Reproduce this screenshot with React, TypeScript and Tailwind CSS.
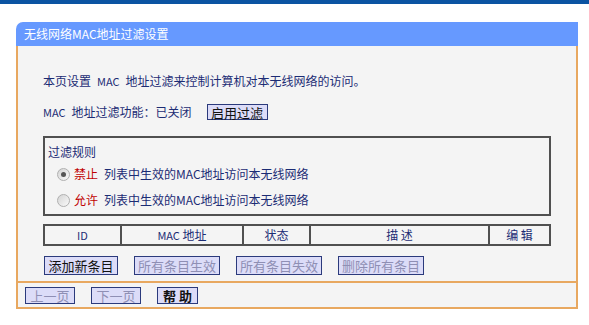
const font = "font-['SimSun','Noto_Sans_CJK_SC',sans-serif]";

const Btn = ({ label, disabled, className }: { label: string; disabled?: boolean; className: string }) => (
  <span
    className={`flex items-center justify-center border border-[#2b3a7c] bg-[#dcdcf8] text-[13px] leading-none ${
      disabled ? "text-[#8f8fb4]" : "text-[#111]"
    } ${className}`}
  >
    {label}
  </span>
);

const Radio = ({ checked }: { checked?: boolean }) => (
  <span className="flex h-[13px] w-[13px] items-center justify-center rounded-full border border-[#b0b0b0] bg-gradient-to-br from-[#d4d4d4] to-[#fafafa]">
    {checked && <span className="h-[5px] w-[5px] rounded-full bg-[#555]" />}
  </span>
);

export default function App() {
  return (
    <div className={`h-[325px] w-[589px] overflow-hidden bg-white ${font} text-[12px] text-[#1c2c74]`}>
      <div className="h-[4px] bg-[#0b54a2]" />
      <div className="ml-[16px] mt-[18px] w-[562px]">
        <div className="flex h-[24px] items-center rounded-tl-[7px] bg-[#6699ff] pl-[8px] text-[12px] text-white">
          无线网络MAC地址过滤设置
        </div>
        <div className="border-x-2 border-b-2 border-[#e8a860] bg-[#f4f4f4] pt-[25px]">
          <div className="pl-[25px] pr-[25px]">
            <div className="flex h-[20px] items-center">
              本页设置 <span className="mx-[6px] text-[11px]">MAC</span> 地址过滤来控制计算机对本无线网络的访问。
            </div>
            <div className="mt-[13px] flex h-[16px] items-center">
              <span className="text-[11px]">MAC</span>
              <span className="ml-[6px]">地址过滤功能：已关闭</span>
              <Btn label="启用过滤" className="ml-[15px] h-[16px] w-[61px]" />
            </div>
            <div className="mt-[16px] h-[80px] w-[508px] border-2 border-[#505050] pl-[3px]">
              <div className="mt-[6px] h-[16px] leading-[16px]">过滤规则</div>
              <div className="mt-[4px] flex h-[20px] items-center pl-[9px]">
                <Radio checked />
                <span className="ml-[4px] text-[#c00000]">禁止</span>
                <span className="ml-[6px]">列表中生效的MAC地址访问本无线网络</span>
              </div>
              <div className="mt-[6px] flex h-[20px] items-center pl-[9px]">
                <Radio />
                <span className="ml-[4px] text-[#c00000]">允许</span>
                <span className="ml-[6px]">列表中生效的MAC地址访问本无线网络</span>
              </div>
            </div>
            <div className="mt-[8px] grid h-[22px] w-[508px] grid-cols-[77px_122px_67px_179px_1fr] border-2 border-[#505050] text-center leading-[18px]">
              <div className="border-r-2 border-[#505050] text-[11px]">ID</div>
              <div className="border-r-2 border-[#505050]">
                <span className="text-[11px]">MAC</span> 地址
              </div>
              <div className="border-r-2 border-[#505050]">状态</div>
              <div className="border-r-2 border-[#505050]">描 述</div>
              <div>编 辑</div>
            </div>
            <div className="mt-[10px] flex h-[19px] items-center">
              <Btn label="添加新条目" className="ml-[1px] h-[19px] w-[74px]" />
              <Btn label="所有条目生效" disabled className="ml-[16px] h-[19px] w-[86px]" />
              <Btn label="所有条目失效" disabled className="ml-[16px] h-[19px] w-[86px]" />
              <Btn label="删除所有条目" disabled className="ml-[16px] h-[19px] w-[86px]" />
            </div>
          </div>
          <div className="mt-[6px] border-t-2 border-[#e8a860]" />
          <div className="flex h-[24px] items-center pl-[7px]">
            <Btn label="上一页" disabled className="h-[17px] w-[50px]" />
            <Btn label="下一页" disabled className="ml-[16px] h-[17px] w-[50px]" />
            <Btn label="帮 助" className="ml-[16px] h-[17px] w-[41px] font-bold" />
          </div>
        </div>
      </div>
    </div>
  );
}
